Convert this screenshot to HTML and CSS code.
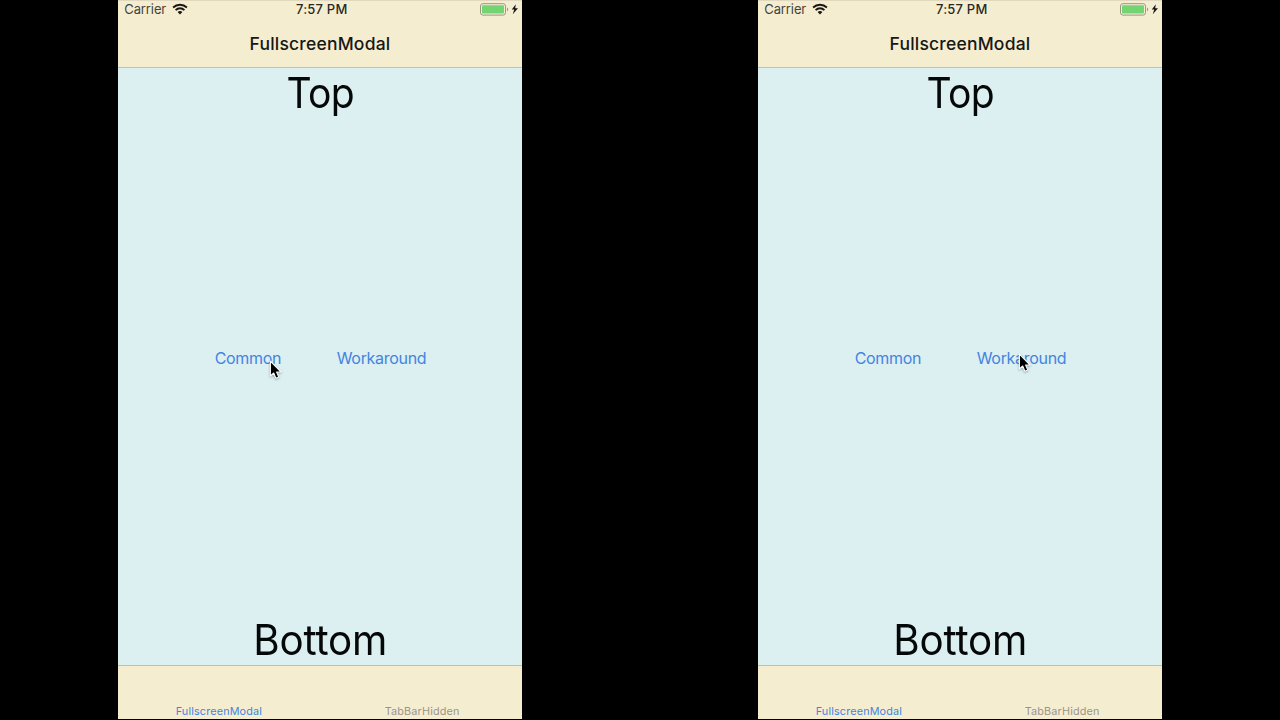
FILE: index.html
```
<!DOCTYPE html>
<html lang="en">
<head>
<meta charset="utf-8">
<title>FullscreenModal</title>
<link rel="stylesheet" href="styles.css">
</head>
<body>
<svg width="0" height="0" class="defs">
  <defs>
    <symbol id="wifi" viewBox="0 0 16 12">
      <g fill="none" stroke="#171713" stroke-width="1.9">
        <path d="M1.1 4.5C5 .8 11 .8 14.9 4.5"/>
        <path d="M3.6 7.1C6.1 4.7 9.9 4.7 12.4 7.1"/>
      </g>
      <path fill="#171713" d="M5.6 9C7 7.7 9 7.7 10.4 9L8 11.5z"/>
    </symbol>
    <symbol id="battery" viewBox="0 0 39 13">
      <rect x=".5" y=".7" width="25" height="11.4" rx="2.4" fill="#f6efd3" stroke="#98947f"/>
      <rect x="2" y="2.2" width="22" height="8.4" rx="1" fill="#72d572"/>
      <path d="M27 4.6c1.6.4 1.6 3.2 0 3.6z" fill="#98947f"/>
      <path d="M35.8 1.3L31.8 6.6h2.4l-1.4 4.6L38 5.3h-2.8z" fill="#171713"/>
    </symbol>
    <symbol id="pointer" viewBox="0 0 14 20">
      <path d="M1.4 1.2V16l3.3-3 2.2 5.2 2.9-1.2-2.2-5h4.5z" fill="#000" stroke="#f7fbfb" stroke-width="1.1" stroke-linejoin="round"/>
    </symbol>
  </defs>
</svg>
<main class="stage">
  <section class="phone">
    <header class="header">
      <div class="status">
        <div class="network"><span class="carrier">Carrier</span><svg class="wifi"><use href="#wifi"/></svg></div>
        <span class="time">7:57 PM</span>
        <svg class="battery"><use href="#battery"/></svg>
      </div>
      <h1 class="title">FullscreenModal</h1>
    </header>
    <div class="content">
      <div class="label top">Top</div>
      <div class="actions"><a class="common">Common</a><a class="workaround">Workaround</a></div>
      <div class="label bottom">Bottom</div>
      <svg class="pointer on-common"><use href="#pointer"/></svg>
    </div>
    <nav class="tabs"><a class="tab active">FullscreenModal</a><a class="tab hidden-tab">TabBarHidden</a></nav>
  </section>
  <section class="phone">
    <header class="header">
      <div class="status">
        <div class="network"><span class="carrier">Carrier</span><svg class="wifi"><use href="#wifi"/></svg></div>
        <span class="time">7:57 PM</span>
        <svg class="battery"><use href="#battery"/></svg>
      </div>
      <h1 class="title">FullscreenModal</h1>
    </header>
    <div class="content">
      <div class="label top">Top</div>
      <div class="actions"><a class="common">Common</a><a class="workaround">Workaround</a></div>
      <div class="label bottom">Bottom</div>
      <svg class="pointer on-workaround"><use href="#pointer"/></svg>
    </div>
    <nav class="tabs"><a class="tab active">FullscreenModal</a><a class="tab hidden-tab">TabBarHidden</a></nav>
  </section>
</main>
</body>
</html>
```
FILE: styles.css
```
* { box-sizing: border-box; }
body { margin: 0; background: #000; font-family: Inter, sans-serif; color: #050808; overflow: hidden; }
.defs { position: absolute; }
.stage { display: flex; justify-content: center; gap: 235.5px; width: 1280px; height: 720px; }
.phone { display: flex; flex-direction: column; width: 404.5px; height: 719px; background: #dceff1; white-space: nowrap; }
.header { height: 68px; background: #f5edd0; border-top: 1px solid #e1d9bf; border-bottom: 1px solid #bfc3b4; }
.status { display: grid; grid-template-columns: 1fr auto 1fr; align-items: center; height: 15px; padding: 0 3px 0 6.5px; }
.network { display: flex; align-items: center; gap: 5.5px; }
.carrier { font-size: 13px; line-height: 16px; letter-spacing: -.1px; color: #44433b; }
.wifi { width: 16px; height: 12px; }
.time { font-size: 13px; line-height: 16px; letter-spacing: .2px; font-weight: 450; color: #2a2924; }
.battery { width: 39px; height: 13px; justify-self: end; }
.title { margin: 17px 0 0; text-align: center; font-size: 17.5px; line-height: 22px; letter-spacing: .2px; font-weight: 550; color: #171713; }
.content { display: flex; flex-direction: column; position: relative; height: 597px; }
.label { text-align: center; font-size: 42px; line-height: 50px; font-weight: 400; }
.top { letter-spacing: -.8px; transform: scaleX(.93); }
.bottom { letter-spacing: -.2px; transform: scaleX(.96); margin-top: auto; }
.actions { display: flex; justify-content: center; gap: 55.5px; margin-top: 230px; padding-left: 1px; font-size: 16px; line-height: 20px; letter-spacing: -.3px; color: #4385df; }
.pointer { position: absolute; width: 14px; height: 20px; filter: drop-shadow(0 1px 1px rgba(0, 0, 0, .3)); }
.on-common { left: 151px; top: 292px; }
.on-workaround { left: 260px; top: 285px; }
.tabs { display: grid; grid-template-columns: 1fr 1fr; align-items: end; height: 54px; background: #f5edd0; border-top: 1px solid #b5c3bd; }
.tab { text-align: center; font-size: 10.8px; line-height: 14px; letter-spacing: .17px; font-weight: 400; }
.active { color: #4385df; }
.hidden-tab { padding-left: 2px; color: #99968a; }
```
